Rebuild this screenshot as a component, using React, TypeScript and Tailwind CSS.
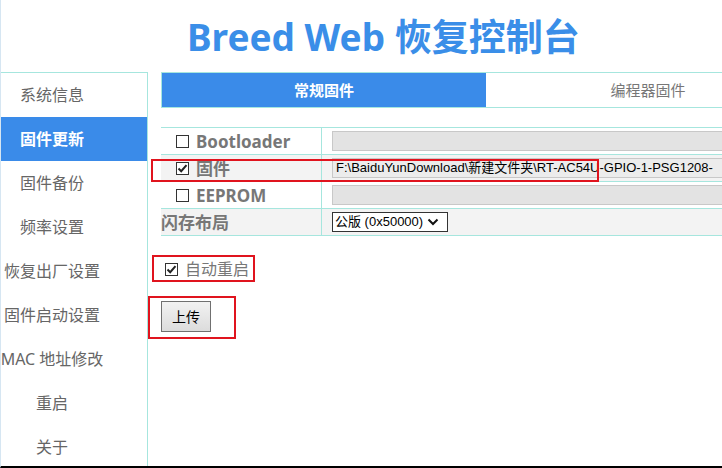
import React from "react";

const CJK = '"Noto Sans", "Noto Sans CJK SC", sans-serif';

function Box({ checked }: { checked?: boolean }) {
  return (
    <span className="inline-flex w-[13px] h-[13px] border border-[#333] bg-white items-center justify-center shrink-0">
      {checked && (
        <svg width="11" height="11" viewBox="0 0 11 11">
          <path d="M1.5 5.5 L4.2 8.2 L9.5 2.2" fill="none" stroke="#222" strokeWidth="2" />
        </svg>
      )}
    </span>
  );
}

const menu = ["系统信息", "固件更新", "固件备份", "频率设置", "恢复出厂设置", "固件启动设置", "MAC 地址修改", "重启", "关于"];

export default function App() {
  return (
    <div
      className="relative w-[722px] h-[468px] overflow-hidden bg-white border-l border-[#d6e6f2] border-b-2 border-b-black"
      style={{ fontFamily: CJK }}
    >
      <div className="h-[72px] flex items-center pl-[186px]">
        <h1 className="text-[37px] font-bold text-[#3a8ee8] leading-none whitespace-nowrap">Breed Web 恢复控制台</h1>
      </div>
      <div className="flex">
        <div className="w-[147px] h-[400px] border-t border-r border-[#a6e6de] shrink-0">
          {menu.map((m, i) => (
            <div
              key={m}
              className={
                "h-[44px] flex items-center justify-center pr-[44px] text-[16px] whitespace-nowrap " +
                (i === 1 ? "bg-[#3a8be9] text-white font-bold" : "text-[#666]")
              }
            >
              {m}
            </div>
          ))}
        </div>
        <div className="pl-[13px] w-[700px] shrink-0">
          <div className="flex h-[36px] border border-[#a6e6de] w-[660px]">
            <div className="w-[324px] bg-[#3a8be9] text-white font-bold text-[15px] flex items-center justify-center">常规固件</div>
            <div className="w-[324px] text-[#777] text-[15px] flex items-center justify-center">编程器固件</div>
          </div>
          <div className="mt-[19px] border-t border-[#a6e6de] w-[700px]">
            {[
              { label: "Bootloader", box: true, checked: false, bg: "bg-white" },
              { label: "固件", box: true, checked: true, bg: "bg-[#f3f3f3]" },
              { label: "EEPROM", box: true, checked: false, bg: "bg-white" },
              { label: "闪存布局", box: false, checked: false, bg: "bg-[#f3f3f3]" },
            ].map((r, i) => (
              <div key={r.label} className={"flex h-[27px] border-b border-[#a6e6de] " + r.bg}>
                <div className="w-[161px] border-r border-[#a6e6de] flex items-center shrink-0">
                  {r.box ? (
                    <div className="flex items-center pl-[15px] gap-[7px]">
                      <Box checked={r.checked} />
                      <span className="text-[17px] font-bold text-[#777] leading-none">{r.label}</span>
                    </div>
                  ) : (
                    <span className="text-[17px] font-bold text-[#777] leading-none">{r.label}</span>
                  )}
                </div>
                <div className="flex items-center pl-[10px] flex-1">
                  {i === 3 ? (
                    <div
                      className="h-[20px] w-[116px] border border-[#333] bg-white flex items-center pl-[2px] gap-[4px] text-[13px] text-black"
                      style={{ fontFamily: '"Liberation Sans", "Noto Sans CJK SC", sans-serif' }}
                    >
                      <span>公版 (0x50000)</span>
                      <svg width="12" height="10" viewBox="0 0 12 10">
                        <path d="M1.5 2.5 L6 7 L10.5 2.5" fill="none" stroke="#111" strokeWidth="2" />
                      </svg>
                    </div>
                  ) : (
                    <div
                      className={
                        "h-[20px] w-[420px] border border-[#c8c8c8] flex items-center pl-[3px] text-[13px] text-black whitespace-nowrap overflow-hidden " +
                        (i === 1 ? "bg-[#ececec]" : "bg-[#e3e3e3]")
                      }
                      style={{ fontFamily: '"Liberation Sans", "Noto Sans CJK SC", sans-serif' }}
                    >
                      {i === 1 ? "F:\\BaiduYunDownload\\新建文件夹\\RT-AC54U-GPIO-1-PSG1208-" : ""}
                    </div>
                  )}
                </div>
              </div>
            ))}
          </div>
          <div className="flex items-center gap-[7px] pl-[4px] mt-[26px] h-[14px]">
            <Box checked />
            <span className="text-[16px] text-[#777]">自动重启</span>
          </div>
          <div className="mt-[25px]">
            <button
              className="w-[50px] h-[31px] border border-[#707070] bg-gradient-to-b from-[#f2f2f2] to-[#dcdcdc] text-[14px] text-black"
              style={{ fontFamily: CJK }}
            >
              上传
            </button>
          </div>
        </div>
      </div>
      <div className="absolute left-[150px] top-[159px] w-[448px] h-[23px] border-2 border-[#e0141e]" />
      <div className="absolute left-[151px] top-[255px] w-[103px] h-[27px] border-2 border-[#e0141e]" />
      <div className="absolute left-[147px] top-[296px] w-[88px] h-[43px] border-2 border-[#e0141e]" />
    </div>
  );
}
